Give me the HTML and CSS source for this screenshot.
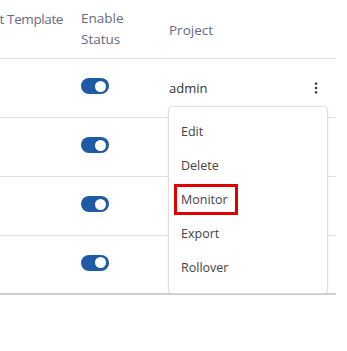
FILE: index.html
```html
<!DOCTYPE html>
<html lang="en">
<head>
    <meta charset="UTF-8">
    <meta name="viewport" content="width=device-width, initial-scale=1.0">
    <title>Alert Rules</title>
    <link rel="stylesheet" href="styles.css">
</head>
<body>
    <div class="table-wrap">
        <table class="rules">
            <thead>
                <tr>
                    <th class="col-template">Alert Template</th>
                    <th class="col-status">Enable<br>Status</th>
                    <th class="col-project">Project</th>
                </tr>
            </thead>
            <tbody>
                <tr>
                    <td class="col-template"></td>
                    <td class="col-status"><span class="toggle"></span></td>
                    <td class="col-project">
                        <div class="project-cell">
                            <span>admin</span>
                            <button class="kebab" aria-label="More">
                                <svg width="4" height="12" viewBox="0 0 4 12">
                                    <rect x="1" y="0.5" width="2.2" height="2.2" fill="#333"/>
                                    <rect x="1" y="4.9" width="2.2" height="2.2" fill="#333"/>
                                    <rect x="1" y="9.3" width="2.2" height="2.2" fill="#333"/>
                                </svg>
                            </button>
                            <ul class="menu">
                                <li>Edit</li>
                                <li>Delete</li>
                                <li><span class="highlight">Monitor</span></li>
                                <li>Export</li>
                                <li>Rollover</li>
                            </ul>
                        </div>
                    </td>
                </tr>
                <tr>
                    <td class="col-template"></td>
                    <td class="col-status"><span class="toggle"></span></td>
                    <td class="col-project"></td>
                </tr>
                <tr>
                    <td class="col-template"></td>
                    <td class="col-status"><span class="toggle"></span></td>
                    <td class="col-project"></td>
                </tr>
                <tr>
                    <td class="col-template"></td>
                    <td class="col-status"><span class="toggle"></span></td>
                    <td class="col-project"></td>
                </tr>
            </tbody>
        </table>
    </div>
</body>
</html>
```

FILE: styles.css
```css
body {
    margin: 0;
    font-family: "Segoe UI", "Open Sans", sans-serif;
    font-size: 13px;
    color: #333;
    background-color: white;
    overflow: hidden;
}

.table-wrap {
    width: 336px;
}

.rules {
    border-collapse: collapse;
    table-layout: fixed;
    width: 387px;
    margin-left: -51px;
}

.rules th {
    font-weight: normal;
    font-size: 13.5px;
    color: #676a80;
    text-align: left;
    vertical-align: middle;
    height: 58px;
    padding: 0 12px;
    line-height: 21px;
    box-sizing: border-box;
    border-bottom: 1px solid #e1e1e4;
}

.rules th.col-status {
    padding-top: 1px;
}

.rules th.col-project {
    padding-top: 4px;
}

.rules td {
    height: 59px;
    padding: 0 12px;
    box-sizing: border-box;
    vertical-align: middle;
    border-bottom: 1px solid #e1e1e4;
}

.rules tbody tr:last-child td {
    border-bottom: 2px solid #cfcfd2;
}

.rules th.col-template {
    vertical-align: top;
    padding: 9px 6px 0 0;
    text-align: right;
    letter-spacing: -0.4px;
}

.col-template {
    width: 120px;
    white-space: nowrap;
}

.col-status {
    width: 88px;
}

.col-project {
    width: 179px;
}

.rules td.col-project {
    padding-right: 18px;
}

.toggle {
    display: block;
    width: 28px;
    height: 16px;
    border-radius: 8px;
    background-color: #1f5aa5;
    position: relative;
    margin-bottom: 3px;
}

.toggle::after {
    content: "";
    position: absolute;
    right: 3px;
    top: 2.5px;
    width: 11px;
    height: 11px;
    border-radius: 50%;
    background-color: white;
}

.project-cell {
    position: relative;
    display: flex;
    justify-content: space-between;
    align-items: center;
    color: #333;
}

.kebab {
    border: none;
    background: none;
    padding: 0;
    width: 4px;
    height: 12px;
    display: flex;
    cursor: pointer;
}

.menu {
    position: absolute;
    top: 27px;
    left: -1px;
    width: 160px;
    margin: 0;
    padding: 8px 0;
    list-style: none;
    background-color: white;
    border: 1px solid #dedee2;
    border-radius: 4px;
    box-sizing: border-box;
    box-shadow: 0 1px 3px rgba(0, 0, 0, 0.06);
    z-index: 10;
}

.menu li {
    height: 34px;
    display: flex;
    align-items: center;
    padding-left: 12px;
    font-size: 12.5px;
    color: #444;
}

.highlight {
    border: 3px solid #e00000;
    padding: 4px 7px 4px 4px;
    margin-left: -7px;
}
```
